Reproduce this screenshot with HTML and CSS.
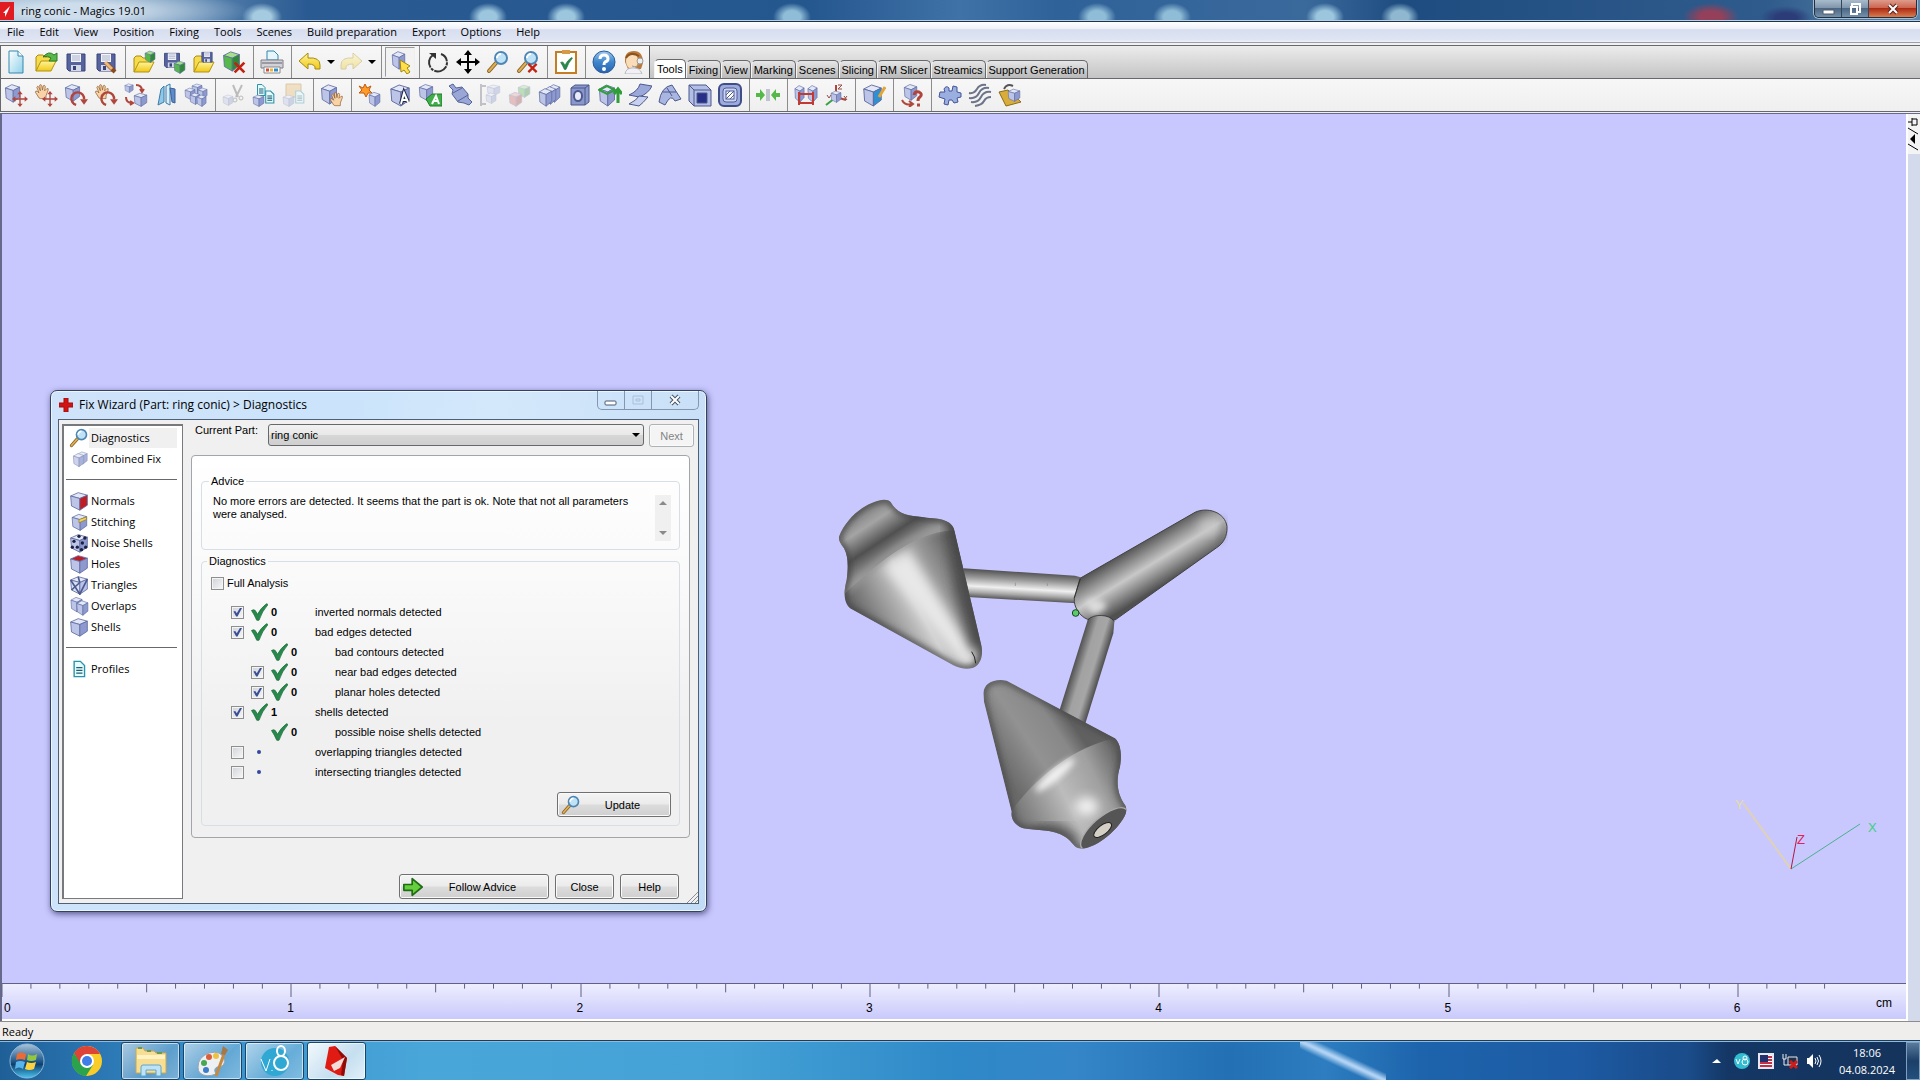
FILE: index.html
```html
<!DOCTYPE html>
<html lang="en">
<head>
<meta charset="utf-8">
<title>ring conic - Magics 19.01</title>
<link rel="stylesheet" href="styles.css">
</head>
<body>
<svg class="defs" aria-hidden="true">
  <defs>
    <linearGradient id="gPaper" x1="0" y1="0" x2="1" y2="1"><stop offset="0" stop-color="#fff"/><stop offset="1" stop-color="#8fd0ea"/></linearGradient>
    <linearGradient id="gYellow" x1="0" y1="0" x2="0" y2="1"><stop offset="0" stop-color="#fff59a"/><stop offset="1" stop-color="#f0c818"/></linearGradient>
    <linearGradient id="gBall" x1="0" y1="0" x2="0" y2="1"><stop offset="0" stop-color="#9cc8f0"/><stop offset=".5" stop-color="#3f86cc"/><stop offset="1" stop-color="#2a62ae"/></linearGradient>
  </defs>
  <symbol id="cube" viewBox="0 0 24 24" preserveAspectRatio="none">
    <g stroke="#5f6ca0" stroke-width="1" stroke-linejoin="round">
      <path class="cube-top" d="M2 6 11 2 22 5 13 9Z"/>
      <path class="cube-left" d="M2 6 13 9V23L3 18Z"/>
      <path class="cube-right" d="M13 9 22 5V17L13 23Z"/>
    </g>
  </symbol>
  <symbol id="folder" viewBox="0 0 24 24">
    <path d="M2 21V7L4 5H9L11 7H18V11" fill="#f6dc4c" stroke="#a88a14"/>
    <path d="M2 21 7 11H22L17 21Z" fill="url(#gYellow)" stroke="#b0920f" stroke-linejoin="round"/>
  </symbol>
  <symbol id="disk" viewBox="0 0 24 24">
    <path d="M3 4H21V21H5L3 19Z" fill="#56639c" stroke="#39457a"/>
    <path d="M7 4H17V12H7Z" fill="#f2f4fa"/><path d="M8 6H16M8 8H16M8 10H16" stroke="#aab2cc"/>
    <path d="M7 15H17V21H7Z" fill="#d5d9e6"/><path d="M9 16H12V20H9Z" fill="#39457a"/>
  </symbol>
  <symbol id="lens" viewBox="0 0 24 24">
    <path d="M10 13 3 21" stroke="#8a6420" stroke-width="4" stroke-linecap="round"/><path d="M10 13 3 21" stroke="#dfae58" stroke-width="2" stroke-linecap="round"/>
    <circle cx="15" cy="8" r="6" fill="#bfe2f6" stroke="#4d86b4" stroke-width="2"/><path d="M11 8A4 4 0 0 1 15 4" stroke="#fff" stroke-width="2" fill="none"/>
  </symbol>
  <symbol id="hand" viewBox="0 0 24 24">
    <path d="M7 21 2 13Q2 10 5 12L7 14 4 6Q5 3 7 6L9 11 8 3Q10 1 11 4L12 10 13 4Q15 2 16 5L15 11 18 8Q21 7 20 10L17 18V22H9Z" fill="#f9d3a8" stroke="#8e5a2c" stroke-linejoin="round"/>
  </symbol>
  <symbol id="move" viewBox="0 0 24 24">
    <path d="M12 2V22M2 12H22" stroke="currentColor" stroke-width="2"/>
    <path d="M12 0 16 5H8ZM12 24 8 19H16ZM0 12 5 8V16ZM24 12 19 16V8Z" fill="currentColor"/>
  </symbol>
  <symbol id="turn" viewBox="0 0 24 24">
    <path d="M9 20A8 8 0 1 1 19 13" fill="none" stroke="#b0453c" stroke-width="3"/><path d="M14 13H24L19 20Z" fill="#b0453c"/>
  </symbol>
  <symbol id="page" viewBox="0 0 24 24">
    <path d="M5 1H14L19 6V23H5Z" fill="url(#gPaper)" stroke="#3389ad"/><path d="M14 1V6H19" fill="#fff" stroke="#3389ad"/>
  </symbol>
  <symbol id="textpage" viewBox="0 0 24 24">
    <path d="M5 1H14L20 7V23H5Z" fill="#e6fbff" stroke="#2b93a8" stroke-width="2"/><path d="M8 10H17M8 14H17M8 18H17" stroke="#1b5e74" stroke-width="2"/>
  </symbol>
  <symbol id="tick" viewBox="0 0 24 24">
    <path d="M2 10Q5 8 7 10L10 15Q14 7 22 1L24 2Q16 11 12 23H9Q6 16 2 10Z" fill="#278a4c" stroke="#1b6b39"/>
  </symbol>
  <symbol id="cross" viewBox="0 0 24 24"><path d="M3 3 21 21M21 3 3 21" stroke="#c22214" stroke-width="5"/></symbol>
</svg>

<header class="titlebar">
  <svg class="app-icon" viewBox="0 0 14 18"><path d="M0 0H14V18H0Z" fill="#e01b22"/><path d="M3 11 10 4 8 9 5 15 5 11Z" fill="#fff"/></svg>
  <h1>ring conic - Magics 19.01</h1>
  <div class="win-controls">
    <button class="wc" aria-label="Minimize"><svg width="14" height="14"><path d="M2 8H13V12H2Z" fill="#fff" stroke="#555b66"/></svg></button>
    <button class="wc" aria-label="Restore"><svg width="14" height="14"><path d="M4 4V2H12V10H10" fill="none" stroke="#fff" stroke-width="2"/><path d="M3 5H9V12H3Z" fill="none" stroke="#fff" stroke-width="2"/></svg></button>
    <button class="wc wc-close" aria-label="Close"><svg width="14" height="14"><path d="M3 3 11 11M11 3 3 11" stroke="#5a2620" stroke-width="4"/><path d="M3 3 11 11M11 3 3 11" stroke="#fff" stroke-width="2"/></svg></button>
  </div>
</header>

<nav class="menubar">
  <a href="#">File</a><a href="#">Edit</a><a href="#">View</a><a href="#">Position</a><a href="#">Fixing</a><a href="#">Tools</a><a href="#">Scenes</a><a href="#">Build preparation</a><a href="#">Export</a><a href="#">Options</a><a href="#">Help</a>
</nav>

<div class="toprow">
  <div class="toolbar">
    <div class="group">
      <button aria-label="New"><svg viewBox="0 0 24 24"><use href="#page"/></svg></button>
      <button aria-label="Open"><svg viewBox="0 0 24 24"><use href="#folder"/><path d="M9 7Q15 0 20 5L23 3V11H15L17 8Q14 5 9 7Z" fill="#57b947" stroke="#2c7a26"/></svg></button>
      <button aria-label="Save"><svg viewBox="0 0 24 24"><use href="#disk"/></svg></button>
      <button aria-label="Save as"><svg viewBox="0 0 24 24"><use href="#disk"/><path d="M12 13 21 22" stroke="#8a4a1c" stroke-width="4"/><path d="M11 12 18 19" stroke="#eeb878" stroke-width="3"/></svg></button>
    </div>
    <div class="group">
      <button aria-label="Import part"><svg viewBox="0 0 24 24"><use href="#folder" y="1"/><use class="green" href="#cube" x="12" y="0" width="12" height="13"/></svg></button>
      <button aria-label="Save part"><svg viewBox="0 0 24 24"><use href="#disk" width="20" height="20"/><use class="green" href="#cube" x="11" y="10" width="13" height="14"/></svg></button>
      <button aria-label="Save part as"><svg viewBox="0 0 24 24"><use href="#folder" y="1"/><use href="#disk" x="8" y="0" width="14" height="14"/></svg></button>
      <button aria-label="Unload part"><svg viewBox="0 0 24 24"><use class="green" href="#cube" width="19" height="22"/><use href="#cross" x="11" y="11" width="13" height="13"/></svg></button>
    </div>
    <div class="group">
      <button aria-label="Print"><svg viewBox="0 0 24 24"><path d="M7 10V1H14L18 5V10Z" fill="#e6f6fd" stroke="#2f86ac"/><path d="M1 10H23V18H1Z" fill="#d2d2d8" stroke="#808088"/><path d="M2 13H22" stroke="#9a9aa4" stroke-width="2"/><path d="M4 17H20V23H4Z" fill="#fff" stroke="#888"/><path d="M6 20H9" stroke="#d34a38" stroke-width="3"/><path d="M10 20H13" stroke="#eab83a" stroke-width="3"/><path d="M14 20H18" stroke="#2e8fc4" stroke-width="3"/></svg></button>
    </div>
    <div class="group">
      <button aria-label="Undo"><svg viewBox="0 0 24 24"><path d="M1 11 10 3V8Q22 7 22 15V19H17Q18 14 10 14V19Z" fill="url(#gYellow)" stroke="#a58a10"/></svg></button>
      <button class="drop" aria-label="Undo list"><svg viewBox="0 0 8 8"><path d="M0 2H8L4 6Z"/></svg></button>
      <button class="off" aria-label="Redo"><svg viewBox="0 0 24 24"><path d="M23 11 14 3V8Q2 7 2 15V19H7Q6 14 14 14V19Z" fill="url(#gYellow)" stroke="#a58a10"/></svg></button>
      <button class="drop" aria-label="Redo list"><svg viewBox="0 0 8 8"><path d="M0 2H8L4 6Z"/></svg></button>
    </div>
    <div class="group">
      <button class="pressed" aria-label="Select parts"><svg viewBox="0 0 24 24"><use href="#cube" x="3" width="15" height="20"/><path d="M12 10 22 16 19 18 22 22 19 24 16 20 13 22Z" fill="#ffe04a" stroke="#a3850e"/></svg></button>
    </div>
    <div class="group">
      <button aria-label="Rotate"><svg viewBox="0 0 24 24"><path d="M7 5A9 9 0 1 0 15 4" fill="none" stroke="#333" stroke-width="2" stroke-dasharray="14 1 3 1"/><path d="M3 3H10V9Z" fill="#333"/></svg></button>
      <button aria-label="Pan"><svg viewBox="0 0 24 24"><use href="#move"/></svg></button>
      <button aria-label="Zoom"><svg viewBox="0 0 24 24"><use href="#lens"/></svg></button>
      <button aria-label="Unzoom"><svg viewBox="0 0 24 24"><use href="#lens"/><use href="#cross" x="11" y="12" width="11" height="12"/></svg></button>
    </div>
    <div class="group">
      <button aria-label="Checklist"><svg viewBox="0 0 24 24"><path d="M2 2H22V23H2Z" fill="#fff" stroke="#c57d22" stroke-width="2"/><path d="M8 0H16V4H8Z" fill="#d59a4a"/><use href="#tick" x="5" y="7" width="14" height="13"/></svg></button>
    </div>
    <div class="group last">
      <button aria-label="Help"><svg viewBox="0 0 24 24"><circle cx="12" cy="12" r="11" fill="url(#gBall)" stroke="#2a5d9c"/><path d="M8 9Q8 5 12 5 16 5 16 9 16 11 13 12 12 13 12 15" fill="none" stroke="#fff" stroke-width="3"/><circle cx="12" cy="19" r="2" fill="#fff"/></svg></button>
      <button aria-label="Support"><svg viewBox="0 0 24 24"><path d="M3 12Q2 1 12 1 21 1 21 13L19 19H6Z" fill="#b97a3c"/><ellipse cx="10" cy="11" rx="6" ry="8" fill="#fbdcb8"/><path d="M3 24Q4 18 10 18 18 17 20 24Z" fill="#f1f1f5" stroke="#b8b8c4"/><path d="M4 8Q8 1 17 6" stroke="#8a5422" stroke-width="2" fill="none"/><circle cx="18" cy="11" r="3" fill="#eee" stroke="#999"/><path d="M17 14Q15 18 10 16" stroke="#999" fill="none"/></svg></button>
    </div>
  </div>
  <nav class="tabs">
    <button class="tab active">Tools</button><button class="tab">Fixing</button><button class="tab">View</button><button class="tab">Marking</button><button class="tab">Scenes</button><button class="tab">Slicing</button><button class="tab">RM Slicer</button><button class="tab">Streamics</button><button class="tab">Support Generation</button>
  </nav>
</div>

<div class="toolbar second">
  <div class="group red">
    <button aria-label="Translate"><svg viewBox="0 0 24 24"><use href="#cube" width="17" height="20"/><use href="#move" x="8" y="8" width="16" height="16"/></svg></button>
    <button aria-label="Interactive translate"><svg viewBox="0 0 24 24"><use href="#hand" width="17" height="17"/><use href="#move" x="8" y="8" width="16" height="16"/></svg></button>
    <button aria-label="Rotate part"><svg viewBox="0 0 24 24"><use href="#cube" width="17" height="19"/><use href="#turn" x="5" y="6" width="19" height="19"/></svg></button>
    <button aria-label="Interactive rotate"><svg viewBox="0 0 24 24"><use href="#hand" width="17" height="17"/><use href="#turn" x="5" y="6" width="19" height="19"/></svg></button>
    <button aria-label="Rescale"><svg viewBox="0 0 24 24"><use href="#cube" width="10" height="10"/><use href="#cube" x="9" y="9" width="15" height="15"/><path d="M12 2Q18 2 18 8M16 6 18 9 20 6M2 14Q2 20 8 20M6 18 9 20 6 22" fill="none" stroke="#b0453c" stroke-width="2"/></svg></button>
    <button aria-label="Mirror"><svg viewBox="0 0 24 24"><path d="M4 22 7 6 10 3V19Z" fill="#8fc9e8" stroke="#3d7ba8"/><path d="M12 3 16 1V22L12 20Z" fill="#d7effa" stroke="#3d7ba8"/><path d="M16 5 21 6V20L18 19Z" fill="#5d8cc8" stroke="#3d5f98"/></svg></button>
    <button aria-label="Duplicate"><svg viewBox="0 0 24 24"><use href="#cube" x="7" y="0" width="12" height="12"/><use href="#cube" x="0" y="4" width="12" height="13"/><use href="#cube" x="13" y="4" width="11" height="12"/><use href="#cube" x="5" y="9" width="12" height="13"/><use href="#cube" x="12" y="11" width="11" height="13"/></svg></button>
  </div>
  <div class="group">
    <button class="off" aria-label="Cut"><svg viewBox="0 0 24 24"><path d="M14 14 20 2M16 14 11 2" stroke="#555" stroke-width="2"/><circle cx="13" cy="17" r="2" fill="none" stroke="#555"/><circle cx="19" cy="15" r="2" fill="none" stroke="#555"/><use href="#cube" y="11" width="12" height="12"/></svg></button>
    <button aria-label="Copy"><svg viewBox="0 0 24 24"><use href="#textpage" x="3" width="12" height="14"/><use href="#cube" y="11" width="13" height="13"/><use href="#textpage" x="11" y="6" width="13" height="16"/></svg></button>
    <button class="off" aria-label="Paste"><svg viewBox="0 0 24 24"><path d="M4 1H19V14H4Z" fill="#e8b868" stroke="#a87624"/><use href="#cube" y="11" width="13" height="13"/><use href="#textpage" x="11" y="6" width="13" height="16"/></svg></button>
  </div>
  <div class="group">
    <button aria-label="Pick and place"><svg viewBox="0 0 24 24"><use href="#cube" width="18" height="22"/><use href="#hand" x="9" y="8" width="16" height="16"/></svg></button>
  </div>
  <div class="group">
    <button aria-label="Create part"><svg viewBox="0 0 24 24"><path d="M7 1 9 5 13 3 11 7 14 10 10 10 8 14 6 10 1 10 4 7 1 3 5 5Z" fill="#ff9b28" stroke="#c25a0e"/><use href="#cube" x="10" y="8" width="13" height="16"/></svg></button>
    <button aria-label="Label"><svg viewBox="0 0 24 24"><use href="#cube" x="1" width="22" height="24"/><path d="M13 21 16 10 20 19M14 17H19" stroke="#1d2444" stroke-width="4" fill="none"/><path d="M13 21 16 10 20 19M14 17H19" stroke="#fff" stroke-width="2" fill="none"/></svg></button>
    <button aria-label="Text label"><svg viewBox="0 0 24 24"><use href="#cube" width="16" height="18"/><path d="M8 16 14 11H24V23H12Z" fill="#3fae4b" stroke="#217a2c"/><path d="M14 21 18 13 21 21M16 18H20" stroke="#fff" stroke-width="2" fill="none"/></svg></button>
    <button aria-label="Sprue"><svg viewBox="0 0 24 24"><path d="M1 3 5 1 8 5 14 4 20 11 20 15 24 19 21 22 16 20 10 19 4 11 5 7Z" fill="#9aa7d6" stroke="#55629a"/><path d="M5 10 14 5M10 18 20 12" stroke="#55629a"/></svg></button>
    <button class="off" aria-label="Cut or punch"><svg viewBox="0 0 24 24"><path d="M3 1V23M3 3H8M3 21H8" stroke="#667" fill="none" stroke-width="2"/><use href="#cube" x="8" y="1" width="15" height="12"/><use href="#cube" x="7" y="9" width="12" height="12"/></svg></button>
    <button class="off" aria-label="Boolean"><svg viewBox="0 0 24 24"><use class="green" href="#cube" x="9" y="1" width="14" height="14"/><use class="redcube" href="#cube" y="8" width="15" height="16"/></svg></button>
    <button aria-label="Offset"><svg viewBox="0 0 24 24"><use href="#cube" x="9" y="0" width="14" height="20"/><use href="#cube" x="5" y="2" width="14" height="20"/><use href="#cube" y="4" width="15" height="20"/></svg></button>
    <button aria-label="Perforate"><svg viewBox="0 0 24 24"><path d="M3 5 7 2H21V19L17 22H3Z" fill="#8a97cc" stroke="#4d598c"/><path d="M3 5H17V22M17 5 21 2" stroke="#4d598c" fill="none"/><ellipse cx="10" cy="13" rx="4" ry="5" fill="#e8ecfa" stroke="#4d598c" stroke-width="2"/></svg></button>
    <button aria-label="Extrude"><svg viewBox="0 0 24 24"><use href="#cube" width="18" height="24"/><path d="M1 7 9 3 17 7 9 11Z" stroke="#2f9e38" fill="none" stroke-width="2"/><path d="M20 20V8M16 11 20 6 24 11" fill="none" stroke="#2f9e38" stroke-width="3"/></svg></button>
    <button aria-label="Surface to solid"><svg viewBox="0 0 24 24"><path d="M1 12Q10 8 12 1L24 3Q20 11 11 14Z" fill="#9ba8da" stroke="#4d598c"/><path d="M1 21Q9 17 11 13L20 14Q15 20 11 23Z" fill="#c7d0ee" stroke="#4d598c"/></svg></button>
    <button aria-label="Surface"><svg viewBox="0 0 24 24"><path d="M1 19Q3 4 14 2L23 16 17 18Q13 10 7 22Z" fill="#a9b6e2" stroke="#4d598c"/><path d="M5 9 18 9M9 5 14 13" stroke="#4d598c"/></svg></button>
    <button aria-label="Hollow"><svg viewBox="0 0 24 24"><path d="M1 2H18L23 7V23H6L1 18Z" fill="#b3bee6" stroke="#4d598c"/><path d="M1 2 6 7H23M6 7V23" stroke="#4d598c" fill="none"/><path d="M9 10H19V20H9Z" fill="#272f86" stroke="#4d598c"/></svg></button>
    <button aria-label="Structure"><svg viewBox="0 0 24 24"><rect x="1" y="1" width="22" height="22" rx="5" fill="#9dabdc" stroke="#3f4d88" stroke-width="2"/><rect x="5" y="5" width="14" height="14" rx="3" fill="#c8d2f2" stroke="#4f5d98"/><rect x="8" y="8" width="8" height="8" fill="#fff" stroke="#4f5d98"/><path d="M8 12 12 8M8 16 16 8M12 16 16 12" stroke="#4f5d98"/></svg></button>
  </div>
  <div class="group">
    <button aria-label="Shrink"><svg viewBox="0 0 24 24"><path d="M0 10H4V6L9 12 4 18V14H0ZM24 10H20V6L15 12 20 18V14H24Z" fill="#54b948"/><path d="M11 6V18M13 6V18" stroke="#8b93a8"/></svg></button>
  </div>
  <div class="group">
    <button aria-label="Distance"><svg viewBox="0 0 24 24"><use href="#cube" y="1" width="11" height="19"/><use href="#cube" x="13" y="1" width="11" height="19"/><path d="M5 11H19M5 20H20M5 9V22M19 9V22" stroke="#c23a34" stroke-width="2"/></svg></button>
    <button aria-label="Coordinate system"><svg viewBox="0 0 24 24"><path d="M12 12V2M12 14 22 17" stroke="#b0453c" stroke-width="2"/><path d="M11 15 2 22" stroke="#37a145" stroke-width="2"/><use href="#cube" x="6" y="7" width="12" height="13"/><path d="M14 2H18L14 6H18M3 12 5 15 7 12M20 13 23 17M23 13 20 17" stroke="#9a4a40" fill="none"/></svg></button>
  </div>
  <div class="group">
    <button aria-label="Edit part"><svg viewBox="0 0 24 24"><use class="blue" href="#cube" width="21" height="24"/><path d="M23 4 17 14" stroke="#e2a53a" stroke-width="3"/></svg></button>
  </div>
  <div class="group">
    <button aria-label="Part info"><svg viewBox="0 0 24 24"><use href="#cube" x="3" width="15" height="18"/><path d="M2 17Q5 23 12 21M9 18 13 21 9 24" stroke="#b0453c" stroke-width="2" fill="none"/><path d="M14 12Q15 8 19 9 23 11 20 14 18 15 18 18M17 22H20" stroke="#b0453c" stroke-width="3" fill="none"/></svg></button>
  </div>
  <div class="group last">
    <button aria-label="Settings"><svg viewBox="0 0 24 24"><path d="M2 9H7L6 6Q8 2 11 5V8H14L15 3 19 4V9L23 10V14L19 15 20 19 16 20 14 17H11L10 22 6 21 7 16 1 14Z" fill="#9aaee0" stroke="#43549a"/></svg></button>
    <button aria-label="Texture"><svg viewBox="0 0 24 24"><path d="M1 10Q6 11 9 6T18 2M1 15Q8 16 11 10T21 5M3 19Q10 20 13 14T23 9M7 23Q14 22 16 18T23 14" fill="none" stroke="#6c7488" stroke-width="2"/></svg></button>
    <button aria-label="Unfold"><svg viewBox="0 0 24 24"><path d="M1 9 10 7 23 19 8 23Z" fill="#d9ad3c" stroke="#8b6a18"/><use href="#cube" x="9" y="5" width="14" height="14"/><path d="M6 6Q9 0 15 3" stroke="#555" fill="none" stroke-width="2"/></svg></button>
  </div>
</div>

<main class="workspace">
  <div class="scene">
    <div class="canvas">
      <svg class="model" viewBox="0 0 1290 1140" role="img" aria-label="ring conic part">
        <defs>
          <linearGradient id="rodA" gradientUnits="userSpaceOnUse" x1="610" y1="274" x2="605" y2="362"><stop offset="0" stop-color="#4c4c4c"/><stop offset=".3" stop-color="#999"/><stop offset=".6" stop-color="#f0f0f0"/><stop offset=".8" stop-color="#aaa"/><stop offset="1" stop-color="#505050"/></linearGradient>
          <linearGradient id="rodB" gradientUnits="userSpaceOnUse" x1="955" y1="192" x2="1030" y2="315"><stop offset="0" stop-color="#555"/><stop offset=".25" stop-color="#909090"/><stop offset=".5" stop-color="#c8c8c8"/><stop offset=".72" stop-color="#959595"/><stop offset="1" stop-color="#505050"/></linearGradient>
          <linearGradient id="rodC" gradientUnits="userSpaceOnUse" x1="764" y1="550" x2="842" y2="574"><stop offset="0" stop-color="#555"/><stop offset=".35" stop-color="#a2a2a2"/><stop offset=".7" stop-color="#a6a6a6"/><stop offset="1" stop-color="#555"/></linearGradient>
          <linearGradient id="coneA" gradientUnits="userSpaceOnUse" x1="110" y1="400" x2="440" y2="220"><stop offset="0" stop-color="#666"/><stop offset=".25" stop-color="#a0a0a0"/><stop offset=".45" stop-color="#d0d0d0"/><stop offset=".75" stop-color="#8c8c8c"/><stop offset="1" stop-color="#505050"/></linearGradient>
          <linearGradient id="neckA" gradientUnits="userSpaceOnUse" x1="120" y1="90" x2="215" y2="235"><stop offset="0" stop-color="#808080"/><stop offset=".3" stop-color="#a4a4a4"/><stop offset=".65" stop-color="#505050"/><stop offset="1" stop-color="#9a9a9a"/></linearGradient>
          <linearGradient id="coneB" gradientUnits="userSpaceOnUse" x1="520" y1="830" x2="730" y2="690"><stop offset="0" stop-color="#6a6a6a"/><stop offset=".45" stop-color="#929292"/><stop offset=".8" stop-color="#888"/><stop offset="1" stop-color="#606060"/></linearGradient>
          <linearGradient id="neckB" gradientUnits="userSpaceOnUse" x1="590" y1="1020" x2="910" y2="860"><stop offset="0" stop-color="#707070"/><stop offset=".45" stop-color="#bcbcbc"/><stop offset=".75" stop-color="#a0a0a0"/><stop offset="1" stop-color="#666"/></linearGradient>
          <filter id="soft" x="-50%" y="-50%" width="200%" height="200%"><feGaussianBlur stdDeviation="16"/></filter>
          <filter id="softer" x="-50%" y="-50%" width="200%" height="200%"><feGaussianBlur stdDeviation="9"/></filter>
          <path id="outA" d="M57 170C80 110 140 65 190 59 215 58 212 70 222 80 245 108 280 108 320 113 370 115 400 125 404 155L485 500C490 530 480 555 460 563 440 570 420 565 400 556L90 385C68 365 72 330 80 300 85 260 85 230 72 205 60 190 55 180 57 170Z"/>
          <path id="outB" d="M490 640C492 610 520 595 560 602L885 775C905 795 905 830 900 860 888 900 890 940 915 975 925 990 915 1010 900 1030 870 1070 820 1105 785 1106 760 1105 760 1085 735 1070 700 1048 650 1052 610 1045 580 1035 572 1010 575 995L492 665Z"/>
          <clipPath id="clipA"><use href="#outA"/></clipPath>
          <clipPath id="clipB"><use href="#outB"/></clipPath>
        </defs>
        <path d="M430 265 765 287Q780 289 790 297L770 370 430 350Z" fill="url(#rodA)"/>
        <path d="M586 308V318M682 310V318" stroke="#888" stroke-width="2"/>
        <path d="M780 295 1125 97C1160 80 1215 95 1221 140 1222 170 1210 190 1190 203L885 420 803 418C780 410 760 380 763 355Z" fill="url(#rodB)" stroke="#444" stroke-width="3"/>
        <path d="M795 365Q830 345 860 375 850 400 815 402Z" fill="#ddd" filter="url(#softer)"/>
        <ellipse cx="1165" cy="140" rx="25" ry="20" fill="#c9c9c9" filter="url(#soft)"/>
        <path d="M1205 110Q1225 150 1195 190" fill="none" stroke="#555" stroke-width="10" opacity=".5" filter="url(#softer)"/>
        <path d="M803 420C820 400 870 402 883 425L880 460 790 750 712 712Z" fill="url(#rodC)"/>
        <path d="M803 420C820 400 870 402 883 425M781 297 762 355" fill="none" stroke="#222" stroke-width="2"/>
        <g clip-path="url(#clipA)">
          <use href="#outA" fill="url(#coneA)"/>
          <path d="M195 265 265 210 465 530 450 570 430 555Z" fill="#e8e8e8" filter="url(#soft)"/>
          <path d="M0 0H420V150C290 150 190 235 70 345H0Z" fill="url(#neckA)"/>
          <path d="M80 335C190 230 290 150 400 140" fill="none" stroke="#959595" stroke-width="16" filter="url(#softer)"/>
          <path d="M400 120 430 330 480 500" fill="none" stroke="#505050" stroke-width="50" filter="url(#soft)"/>
          <use href="#outA" fill="none" stroke="#444" stroke-width="16" filter="url(#softer)"/>
          <path d="M455 515Q466 530 467 550" fill="none" stroke="#222" stroke-width="3"/>
        </g>
        <g clip-path="url(#clipB)">
          <use href="#outB" fill="url(#coneB)"/>
          <path d="M575 992C640 900 760 800 885 775L1000 800V1140H560Z" fill="url(#neckB)"/>
          <ellipse cx="705" cy="885" rx="75" ry="15" transform="rotate(-40 705 885)" fill="#f4f4f4" filter="url(#softer)"/>
          <ellipse cx="800" cy="980" rx="35" ry="28" fill="#f2f2f2" filter="url(#soft)"/>
          <path d="M640 1060Q720 1020 770 1090" fill="none" stroke="#444" stroke-width="20" filter="url(#soft)"/>
          <use href="#outB" fill="none" stroke="#444" stroke-width="14" filter="url(#softer)"/>
          <ellipse cx="852" cy="1046" rx="88" ry="34" transform="rotate(-41 852 1046)" fill="#555" stroke="#aaa" stroke-width="4"/>
          <ellipse cx="848" cy="1050" rx="32" ry="14" transform="rotate(-38 848 1050)" fill="#d4d0c6" stroke="#222" stroke-width="3"/>
        </g>
        <circle cx="767" cy="399" r="10" fill="#5cc96c" stroke="#14471c" stroke-width="3"/>
      </svg>
      <svg class="axes" viewBox="0 0 150 84">
        <path d="M61 74 13 8" stroke="#e0d2b0" stroke-width="2"/><path d="M61 74 130 29" stroke="#4bb08c"/><path d="M61 74 67 42" stroke="#b01848"/>
        <text x="5" y="14" fill="#e6dca4">Y</text><text x="138" y="37" fill="#3fcf80">X</text><text x="67" y="49" fill="#e0205c">Z</text>
      </svg>

      <section class="dialog" aria-label="Fix Wizard">
        <header class="dlg-title">
          <svg width="14" height="14" viewBox="0 0 14 14"><path d="M5 0H9V5H14V9H9V14H5V9H0V5H5Z" fill="#d31313" stroke="#a50d0d"/></svg>
          <h2>Fix Wizard (Part: ring conic) &gt; Diagnostics</h2>
          <div class="dlg-controls">
            <button aria-label="Minimize"><svg width="14" height="14"><rect x="1" y="8" width="11" height="4" rx="1" fill="#fff" stroke="#4b5b70"/></svg></button>
            <button aria-label="Maximize" disabled><svg width="14" height="14"><path d="M2 3H12V11H2Z M5 6H9V8H5Z" fill="none" stroke="#a9bfda"/></svg></button>
            <button aria-label="Close"><svg width="14" height="14"><path d="M3 3 11 11M11 3 3 11" stroke="#465568" stroke-width="4"/><path d="M3 3 11 11M11 3 3 11" stroke="#fff" stroke-width="2"/></svg></button>
          </div>
        </header>
        <div class="dlg-body">
          <nav class="side">
            <a class="sel" href="#"><svg viewBox="0 0 24 24"><use href="#lens"/></svg><span>Diagnostics</span></a>
            <a href="#"><svg viewBox="0 0 24 24"><g opacity=".75"><use href="#cube" x="9" y="2" width="14" height="17"/><use href="#cube" x="4" y="4" width="15" height="18"/></g></svg><span>Combined Fix</span></a>
            <hr>
            <a href="#"><svg viewBox="0 0 24 24"><use class="rightred" href="#cube"/></svg><span>Normals</span></a>
            <a href="#"><svg viewBox="0 0 24 24"><use href="#cube" x="2" y="1" width="21" height="22"/><path d="M12 9 21 6V9L12 13Z" fill="#f2d35c" stroke="#9a8230"/></svg><span>Stitching</span></a>
            <a href="#"><svg viewBox="0 0 24 24"><use href="#cube"/><g fill="#1b2240"><circle cx="6" cy="10" r="2"/><circle cx="10" cy="17" r="2"/><circle cx="16" cy="12" r="2"/><circle cx="20" cy="17" r="2"/><circle cx="12" cy="4" r="2"/><circle cx="19" cy="6" r="2"/><circle cx="4" cy="17" r="2"/><circle cx="15" cy="20" r="2"/></g></svg><span>Noise Shells</span></a>
            <a href="#"><svg viewBox="0 0 24 24"><use class="topred" href="#cube"/></svg><span>Holes</span></a>
            <a href="#"><svg viewBox="0 0 24 24"><use class="pale" href="#cube"/><path d="M2 6 13 23 22 5M11 2 13 9M3 18 13 9" stroke="#4d598c" fill="none" stroke-width="2"/></svg><span>Triangles</span></a>
            <a href="#"><svg viewBox="0 0 24 24"><use href="#cube" x="1" y="0" width="16" height="20"/><use href="#cube" x="8" y="4" width="16" height="20"/></svg><span>Overlaps</span></a>
            <a href="#"><svg viewBox="0 0 24 24"><use href="#cube"/></svg><span>Shells</span></a>
            <hr>
            <a href="#"><svg viewBox="0 0 24 24"><use href="#textpage" x="2" y="1" width="20" height="22"/></svg><span>Profiles</span></a>
          </nav>
          <div class="content">
            <div class="part-row">
              <label for="part">Current Part:</label>
              <div class="combo"><select id="part"><option>ring conic</option></select><svg width="8" height="8"><path d="M0 2H8L4 6Z"/></svg></div>
              <button class="btn" disabled>Next</button>
            </div>
            <div class="panel">
              <fieldset class="advice">
                <legend>Advice</legend>
                <p>No more errors are detected. It seems that the part is ok. Note that not all parameters were analysed.</p>
                <div class="scroll"><svg width="8" height="8"><path d="M0 6H8L4 2Z" fill="#8a8a8a"/></svg><svg width="8" height="8"><path d="M0 2H8L4 6Z" fill="#8a8a8a"/></svg></div>
              </fieldset>
              <fieldset class="diag">
                <legend>Diagnostics</legend>
                <div class="full"><input type="checkbox" id="full"><label for="full">Full Analysis</label></div>
                <ul>
                  <li><input type="checkbox" id="d1" checked><svg class="ok"><use href="#tick"/></svg><b>0</b><label for="d1">inverted normals detected</label></li>
                  <li><input type="checkbox" id="d2" checked><svg class="ok"><use href="#tick"/></svg><b>0</b><label for="d2">bad edges detected</label></li>
                  <li class="sub"><i></i><svg class="ok"><use href="#tick"/></svg><b>0</b><span>bad contours detected</span></li>
                  <li class="sub"><input type="checkbox" id="d4" checked><svg class="ok"><use href="#tick"/></svg><b>0</b><label for="d4">near bad edges detected</label></li>
                  <li class="sub"><input type="checkbox" id="d5" checked><svg class="ok"><use href="#tick"/></svg><b>0</b><label for="d5">planar holes detected</label></li>
                  <li><input type="checkbox" id="d6" checked><svg class="ok"><use href="#tick"/></svg><b>1</b><label for="d6">shells detected</label></li>
                  <li class="sub"><i></i><svg class="ok"><use href="#tick"/></svg><b>0</b><span>possible noise shells detected</span></li>
                  <li><input type="checkbox" id="d8"><svg class="ok" viewBox="0 0 18 18"><circle cx="9" cy="9" r="2" fill="#33489c"/></svg><b></b><label for="d8">overlapping triangles detected</label></li>
                  <li><input type="checkbox" id="d9"><svg class="ok" viewBox="0 0 18 18"><circle cx="9" cy="9" r="2" fill="#33489c"/></svg><b></b><label for="d9">intersecting triangles detected</label></li>
                </ul>
                <button class="btn icon-btn update"><svg viewBox="0 0 24 24"><use href="#lens"/></svg><span>Update</span></button>
              </fieldset>
            </div>
            <div class="actions">
              <button class="btn icon-btn follow"><svg viewBox="0 0 24 24"><path d="M1 9H11V2L23 12 11 22V16H1Z" fill="#66cf3e" stroke="#1f6b16" stroke-width="2" stroke-linejoin="round"/></svg><span>Follow Advice</span></button>
              <button class="btn">Close</button>
              <button class="btn">Help</button>
            </div>
          </div>
          <svg class="grip" width="12" height="12"><path d="M1 12 12 1M5 12 12 5M9 12 12 9" stroke="#8b9098"/></svg>
        </div>
      </section>
    </div>
    <div class="ruler">
      <div class="cm"><svg viewBox="0 0 100 14" preserveAspectRatio="none"><path d="M0 0V14M10 0V5M20 0V5M30 0V5M40 0V5M50 0V9M60 0V5M70 0V5M80 0V5M90 0V5"/></svg><span>0</span></div>
      <div class="cm"><svg viewBox="0 0 100 14" preserveAspectRatio="none"><path d="M0 0V14M10 0V5M20 0V5M30 0V5M40 0V5M50 0V9M60 0V5M70 0V5M80 0V5M90 0V5"/></svg><span>1</span></div>
      <div class="cm"><svg viewBox="0 0 100 14" preserveAspectRatio="none"><path d="M0 0V14M10 0V5M20 0V5M30 0V5M40 0V5M50 0V9M60 0V5M70 0V5M80 0V5M90 0V5"/></svg><span>2</span></div>
      <div class="cm"><svg viewBox="0 0 100 14" preserveAspectRatio="none"><path d="M0 0V14M10 0V5M20 0V5M30 0V5M40 0V5M50 0V9M60 0V5M70 0V5M80 0V5M90 0V5"/></svg><span>3</span></div>
      <div class="cm"><svg viewBox="0 0 100 14" preserveAspectRatio="none"><path d="M0 0V14M10 0V5M20 0V5M30 0V5M40 0V5M50 0V9M60 0V5M70 0V5M80 0V5M90 0V5"/></svg><span>4</span></div>
      <div class="cm"><svg viewBox="0 0 100 14" preserveAspectRatio="none"><path d="M0 0V14M10 0V5M20 0V5M30 0V5M40 0V5M50 0V9M60 0V5M70 0V5M80 0V5M90 0V5"/></svg><span>5</span></div>
      <div class="cm tail"><svg viewBox="0 0 169 14" preserveAspectRatio="none"><path d="M0 0V14M29 0V5M58 0V5M87 0V5"/></svg><span>6</span><span class="unit">cm</span></div>
    </div>
  </div>
  <aside class="sidestrip"><svg width="12" height="40"><path d="M0 8H4M4 4V12M4 5H9V11H4M0 14 10 20M0 30 10 36" fill="none" stroke="#000"/><path d="M7 20V30L2 25Z"/></svg></aside>
</main>

<footer class="status">Ready</footer>

<div class="taskbar">
  <button class="start" aria-label="Start"><svg viewBox="0 0 38 38"><defs><linearGradient id="gOrb" x1="0" y1="0" x2="0" y2="1"><stop offset="0" stop-color="#a9c4da"/><stop offset=".5" stop-color="#225a8c"/><stop offset=".6" stop-color="#0d3f70"/><stop offset="1" stop-color="#49c4f0"/></linearGradient></defs><circle cx="19" cy="19" r="17" fill="url(#gOrb)" stroke="#8fb8d8"/><path d="M9 12Q13 9 18 12L17 18Q12 16 8 18Z" fill="#ee6a35"/><path d="M20 12Q24 15 29 12L28 18Q23 20 19 18Z" fill="#93c83e"/><path d="M8 20Q12 18 17 20L15 27Q11 24 7 27Z" fill="#58b4ea"/><path d="M19 20Q23 22 28 20L26 27Q21 29 17 27Z" fill="#fcd33e"/></svg></button>
  <button class="pin" aria-label="Chrome"><svg viewBox="0 0 32 32"><circle cx="16" cy="16" r="15" fill="#f9cc28"/><path d="M3 8A15 15 0 0 1 29 9H16L9 19Z" fill="#dd4437"/><path d="M3 8A15 15 0 0 0 15 31L22 20 10 19Z" fill="#2ba24c"/><circle cx="16" cy="16" r="7" fill="#fff"/><circle cx="16" cy="16" r="5" fill="#3f7ee8"/></svg></button>
  <button class="task" aria-label="Explorer"><svg viewBox="0 0 32 32"><path d="M1 3H8L10 6H19L21 8H31V28H1Z" fill="#f6df94" stroke="#caa850"/><path d="M3 3H7M12 6H16M22 8H27" stroke="#6a9a50" stroke-width="2"/><path d="M2 12H30" stroke="#fff3c4" stroke-width="4"/><path d="M6 31V22Q6 20 8 20H24Q26 20 26 22V31H21V25H11V31Z" fill="#bfe3f6" stroke="#5aa6d0"/></svg></button>
  <button class="task" aria-label="Paint"><svg viewBox="0 0 32 32"><path d="M1 22Q1 12 12 8 24 5 27 14 29 22 20 22 16 24 19 29 9 33 3 28 1 26 1 22Z" fill="#eef1f4" stroke="#9aa4b0"/><circle cx="7" cy="18" r="3" fill="#48a850"/><circle cx="12" cy="12" r="3" fill="#d85f3a"/><circle cx="19" cy="11" r="3" fill="#f0c13c"/><circle cx="9" cy="25" r="3" fill="#3c7cc8"/><path d="M27 9 19 31" stroke="#c58a42" stroke-width="3"/><path d="M26 1 31 5 28 10 24 9Z" fill="#a5774a"/></svg></button>
  <button class="task" aria-label="V8"><svg viewBox="0 0 32 32"><circle cx="16" cy="17" r="14" fill="#2fa9d4"/><path d="M2 14 7 26 11 14M13 25V26" stroke="#fff" fill="none" stroke-width="1"/><ellipse cx="22" cy="6" rx="4" ry="5" fill="none" stroke="#fff" stroke-width="2"/><ellipse cx="22" cy="18" rx="7" ry="7" fill="none" stroke="#fff" stroke-width="2"/></svg></button>
  <button class="task current" aria-label="Magics"><svg viewBox="0 0 32 32"><path d="M8 2 14 1 26 13 23 31 17 30 4 23Z" fill="#e01b14"/><path d="M14 1 26 13 23 31 20 30 22 15Z" fill="#8e0c08"/><path d="M10 20 24 12 19 23 13 26Z" fill="#f4dcd8"/></svg></button>
  <div class="tray">
    <svg width="14" height="16"><path d="M0 10H9L5 6Z" fill="#fff"/></svg>
    <svg width="16" height="16" viewBox="0 0 16 16"><circle cx="8" cy="8" r="8" fill="#32bcd2"/><path d="M2 6 4 11 6 6" stroke="#fff" fill="none"/><circle cx="11" cy="9" r="3" fill="none" stroke="#fff"/><circle cx="11" cy="5" r="2" fill="none" stroke="#fff"/></svg>
    <svg width="16" height="16" viewBox="0 0 16 16"><path d="M0 0H16V16H0Z" fill="#e9e6f2"/><path d="M2 2H14V14H2Z" fill="#fff"/><path d="M2 4H14M2 7H14M2 10H14M2 13H14" stroke="#c03048" stroke-width="2"/><path d="M2 2H10V9H2Z" fill="#23306e"/></svg>
    <svg width="16" height="16" viewBox="0 0 16 16"><path d="M1 1V6H4V1M2 6V12H6" stroke="#eee" fill="none"/><path d="M6 4H15V12H6Z" fill="#20304c" stroke="#e8e8e8"/><path d="M8 8 15 15M15 8 8 15" stroke="#d01c18" stroke-width="3"/></svg>
    <svg width="16" height="16" viewBox="0 0 16 16"><path d="M1 5H3L7 1V15L3 11H1Z" fill="#fff"/><path d="M9 5Q11 8 9 11M11 4Q14 8 11 12M13 2Q17 8 13 14" stroke="#fff" fill="none"/></svg>
    <div class="clock"><span>18:06</span><span>04.08.2024</span></div>
  </div>
  <button class="desk" aria-label="Show desktop"></button>
</div>
</body>
</html>
```
FILE: styles.css
```css
* { box-sizing: border-box; }
html, body { height: 100%; margin: 0; }
body {
  display: flex;
  flex-direction: column;
  overflow: hidden;
  background: #f0f0f0;
  font: 11px/14px "Liberation Sans", Arial, sans-serif;
  color: #000;
}
button {
  font: inherit;
  color: inherit;
  margin: 0;
  padding: 0;
  border: 0;
  background: none;
}
h1, h2, p, ul { margin: 0; padding: 0; font: inherit; list-style: none; }
a { color: inherit; text-decoration: none; }
svg { display: block; flex: none; }
.defs { position: absolute; width: 0; height: 0; }

/* cube colours, overridden per icon */
.cube-top { fill: var(--top, #e3e8f8); }
.cube-left { fill: var(--left, #bcc5e8); }
.cube-right { fill: var(--right, #8d99cf); }
.green { --top: #a5e08a; --left: #54b948; --right: #2e8a33; }
.redcube { --top: #e9a0a0; --left: #d46060; --right: #a83a3a; }
.blue { --right: #2f8fd0; }
.rightred { --right: #c01c24; }
.topred { --top: #c01c24; }
.pale { --left: #d9dff5; --right: #b9c2ea; }

/* title bar */
.titlebar {
  flex: none;
  display: flex;
  align-items: center;
  height: 22px;
  border-bottom: 1px solid #1c3450;
  box-shadow: inset 0 -1px #b9cfe2;
  font: 11px/20px "Open Sans", "Noto Sans", sans-serif;
  background:
    radial-gradient(ellipse 20px 14px at 262px 17px, #a5cbe0 45%, transparent),
    radial-gradient(ellipse 19px 14px at 488px 17px, #9cc6de 45%, transparent),
    radial-gradient(ellipse 19px 14px at 566px 17px, #9cc6de 45%, transparent),
    radial-gradient(ellipse 19px 14px at 792px 17px, #8fbcd6 45%, transparent),
    radial-gradient(ellipse 19px 14px at 1097px 17px, #8fbcd6 45%, transparent),
    radial-gradient(ellipse 19px 14px at 1172px 17px, #8fbcd6 45%, transparent),
    radial-gradient(ellipse 19px 14px at 1325px 17px, #9cc6de 45%, transparent),
    radial-gradient(ellipse 19px 14px at 1400px 17px, #8fb8d0 45%, transparent),
    radial-gradient(ellipse 28px 14px at 1711px 17px, #94405a 40%, transparent),
    radial-gradient(ellipse 26px 12px at 1786px 18px, #2b3c78 40%, transparent),
    radial-gradient(ellipse 170px 24px at 80px 11px, rgba(215,228,240,.9) 30%, transparent),
    linear-gradient(90deg, #8fafca, #5b86b0 10%, #2a5a92 16%, #25578f 42%, #3f72a6 50%, #2f6299 55%, #3a699c 68%, #1f4c80 73%, #2f5b8c 92%, #5d87ac);
}
.app-icon { width: 14px; height: 18px; }
.titlebar h1 { margin-left: 7px; }
.win-controls {
  display: flex;
  align-self: flex-start;
  height: 18px;
  margin: 0 3px 0 auto;
  border: 1px solid #20303f;
  border-top: 0;
  border-radius: 0 0 5px 5px;
  box-shadow: 0 0 0 1px #a8bccd;
  overflow: hidden;
}
.wc {
  display: grid;
  place-items: center;
  width: 27px;
  border-right: 1px solid #33475a;
  background: linear-gradient(#a9bccd, #8096ac 45%, #4c6784 50%, #7590aa);
}
.wc-close { width: 47px; border: 0; background: linear-gradient(#dd9c8c, #cd6651 45%, #ae2c14 50%, #d97c50); }

/* menu */
.menubar {
  flex: none;
  display: flex;
  align-items: center;
  gap: 15px;
  height: 21px;
  padding: 0 7px;
  border-bottom: 1px solid #9a9ea8;
  background: linear-gradient(#fff, #eef1f8 35%, #d7deef 38%, #dfe5f3 90%, #f4f4f8);
  font: 11px/18px "Open Sans", "Noto Sans", sans-serif;
}

/* toolbars */
.toprow {
  flex: none;
  display: flex;
  height: 33px;
  margin-top: 2px;
  border-top: 1px solid #66686c;
  border-left: 1px solid #66686c;
  background: linear-gradient(#ececec, #c4c4c4);
}
.toolbar { display: flex; background: linear-gradient(#f7f7f7, #efefef); }
.toprow .toolbar { border-right: 1px solid #55575c; }
.second {
  flex: none;
  height: 34px;
  border: 1px solid #66686c;
  border-right: 0;
}
.group {
  display: flex;
  align-items: center;
  padding: 0 4px 0 3px;
  border-right: 1px solid #8c8c8c;
}
.group:first-child { padding-left: 0; }
.group.last { border-right: 0; padding-right: 0; }
.group button { display: grid; place-items: center; width: 30px; height: 30px; }
.group button svg { width: 24px; height: 24px; }
.group .drop { width: 11px; }
.group .drop svg { width: 8px; height: 8px; }
.group .off { opacity: .35; }
.group .pressed {
  border: 1px solid #999;
  border-right-color: #eee;
  border-bottom-color: #eee;
  background: #f2f2f2;
}
.red { color: #b0453c; }

.tabs { display: flex; align-items: flex-end; padding-left: 4px; }
.tab {
  height: 18px;
  padding: 0 2px;
  border: 1px solid #66686c;
  border-bottom: 0;
  border-left-color: #f4f4f4;
  border-radius: 5px 5px 0 0;
  background: linear-gradient(#e6e6e6, #b8b8b8);
  white-space: nowrap;
}
.tab.active { height: 19px; background: #fff; }

/* workspace */
.workspace {
  flex: 1;
  min-height: 0;
  display: flex;
  margin-top: 1px;
  border-top: 1px solid #66698a;
  border-left: 2px solid #66698a;
}
.scene { flex: 1; display: flex; flex-direction: column; border-right: 2px solid #fff; }
.canvas { flex: 1; position: relative; background: #c8c8ff; }
.sidestrip { width: 12px; background: #d3daec; }
.sidestrip svg { background: #f4f4f4; }
.model { position: absolute; left: 818px; top: 366px; width: 430px; height: 380px; }
.axes { position: absolute; right: 26px; bottom: 104px; width: 150px; height: 84px; font: 13px "Liberation Sans", sans-serif; }

.ruler {
  display: grid;
  grid-template-columns: repeat(6, 289fr) 168fr;
  height: 38px;
  border-top: 1px solid #5f6284;
  border-bottom: 2px solid #fff;
  background: linear-gradient(#eeeeff, #c9c9fb);
  font-size: 12px;
}
.cm { position: relative; display: grid; align-content: start; gap: 4px; }
.cm svg { width: 100%; height: 13px; overflow: visible; }
.cm path { stroke: #5f6284; stroke-width: 1px; vector-effect: non-scaling-stroke; }
.cm span { margin-left: -4px; }
.cm:first-child span { margin-left: 2px; }
.cm .unit { position: absolute; right: 14px; top: 12px; }

.status {
  flex: none;
  height: 19px;
  padding: 0 2px;
  border-top: 1px solid #8c8c8c;
  background: #f0eeec;
  font: 11px/19px "Open Sans", "Noto Sans", sans-serif;
}

/* dialog */
.dialog {
  position: absolute;
  left: 48px;
  top: 276px;
  width: 657px;
  padding: 0 7px 7px;
  border: 1px solid #33435c;
  border-radius: 7px;
  background: linear-gradient(100deg, #cfe3fa, #cbe4fb 40%, #d4e8fb 60%, #c3dcf6);
  box-shadow: inset 0 0 0 1px #eaf5ff, 1px 2px 6px rgba(40,40,90,.7);
}
.dlg-title {
  display: flex;
  align-items: center;
  gap: 6px;
  height: 28px;
  padding-left: 1px;
  font: 12px/18px "Open Sans", "Noto Sans", sans-serif;
}
.dlg-controls {
  display: flex;
  align-self: flex-start;
  height: 19px;
  margin-left: auto;
  border: 1px solid #8496b0;
  border-top: 0;
  border-radius: 0 0 5px 5px;
}
.dlg-controls button { display: grid; place-items: center; width: 27px; border-right: 1px solid #8496b0; }
.dlg-controls button:last-child { width: 46px; border: 0; }
.dlg-body {
  position: relative;
  display: flex;
  gap: 8px;
  padding: 4px 8px 4px 3px;
  border: 1px solid #4f5f76;
  background: #f0f0f0;
}
.side {
  width: 121px;
  padding: 2px 5px 2px 3px;
  border: 1px solid #77797c;
  box-shadow: inset 1px 1px #77797c;
  background: #fff;
  font: 11px/20px "Open Sans", "Noto Sans", sans-serif;
}
.side a { display: grid; grid-template-columns: 20px 1fr; align-items: center; height: 21px; padding-left: 3px; }
.side svg { width: 20px; height: 20px; }
.side span { padding-left: 2px; }
.side .sel span { background: #f0f0f0; }
.side hr { height: 1px; margin: 10px 0; border: 0; background: #66686c; }
.content { flex: 1; }
.part-row { display: flex; gap: 5px; }
.part-row label { width: 72px; padding-left: 4px; margin-top: -1px; }
.combo { flex: 1; display: grid; height: 22px; }
.combo > * { grid-area: 1 / 1; }
.combo svg { place-self: center end; margin-right: 4px; }
.combo select {
  appearance: none;
  padding: 0 2px;
  border: 1px solid #66686c;
  border-radius: 3px;
  background: linear-gradient(#f2f2f2, #e8e8e8 48%, #d6d6d6 52%, #cfcfcf);
  font: inherit;
  color: inherit;
}
.btn {
  width: 59px;
  height: 25px;
  border: 1px solid #707070;
  border-radius: 3px;
  background: linear-gradient(#f4f4f4, #ebebeb 48%, #dcdcdc 52%, #cfcfcf);
  box-shadow: inset 0 0 0 1px #fafafa;
}
.btn:disabled { width: 45px; height: 23px; margin: 0 -4px 0 0; border-color: #adb2b5; background: #f4f4f4; color: #838383; }
.panel {
  margin-top: 8px;
  padding: 18px 9px 11px;
  border: 1px solid #a2a5aa;
  border-radius: 4px;
  background: linear-gradient(#fff, #f9f9f9 35%, #f0f0f0 70%);
}
fieldset { margin: 0; padding: 0; border: 1px solid #d5dfe5; border-radius: 4px; }
legend { margin-left: -4px; padding: 0 2px; }
.advice { display: flex; justify-content: space-between; height: 76px; padding: 7px 8px 7px 11px; }
.advice p { width: 430px; line-height: 13px; }
.scroll { display: flex; flex-direction: column; justify-content: space-between; align-items: center; width: 16px; padding: 4px 0; background: #f0f0f0; height: 46px; }
.diag { margin-top: 4px; height: 272px; padding: 7px 8px 0 9px; }
.full { display: flex; align-items: center; gap: 3px; height: 16px; }
.diag ul { margin-top: 11px; }
.diag li { display: flex; align-items: center; height: 20px; padding-left: 20px; }
.diag .sub { padding-left: 40px; }
.diag i { width: 13px; }
.diag b { width: 44px; margin-left: 3px; }
.ok { width: 18px; height: 18px; margin-left: 6px; }
input[type="checkbox"] {
  appearance: none;
  display: grid;
  place-items: center;
  flex: none;
  width: 13px;
  height: 13px;
  margin: 0;
  border: 1px solid #8e8f8f;
  background: linear-gradient(135deg, #cfd2d8, #f8f8f8);
  box-shadow: inset 0 0 0 1px #f4f4f4;
}
input[type="checkbox"]:checked::before {
  content: "";
  width: 9px;
  height: 9px;
  background: #3a4f96;
  clip-path: polygon(5% 45%, 25% 40%, 42% 65%, 80% 0, 100% 5%, 50% 100%, 35% 100%);
}
.icon-btn { display: grid; grid-template-columns: 20px 1fr; align-items: center; padding: 0 6px 0 3px; }
.icon-btn svg { width: 20px; height: 20px; }
.update { width: 114px; margin: 10px 0 0 auto; }
.follow { width: 150px; }
.actions { display: flex; justify-content: flex-end; gap: 6px; margin: 36px 11px 0 0; }
.grip { position: absolute; right: 0; bottom: 0; }

/* taskbar */
.taskbar {
  flex: none;
  display: flex;
  align-items: center;
  gap: 3px;
  height: 40px;
  border-top: 1px solid #1d3c5c;
  box-shadow: inset 0 1px #8fbcdc;
  background:
    linear-gradient(90deg, transparent 88%, rgba(14,38,74,.55) 90%),
    linear-gradient(to top right, transparent 40%, rgba(190,220,250,.9) 49%, rgba(190,220,250,.9) 51%, transparent 60%) 1300px 0 / 86px 40px no-repeat,
    linear-gradient(90deg, #1f5f97, #2a76b2 5%, #3c93cb 12%, #49a6d9 22%, #44a2d6 38%, #2f88c7 50%, #3486c8 56%, #2370b4 64%, #2d7dc0 69%, #1d64ac 74%, #1d5ba4 82%, #1a4d8c 87%, #1d4470);
}
.start { width: 44px; height: 38px; margin-left: 8px; }
.start svg { width: 38px; height: 38px; }
.pin { display: grid; place-items: center; width: 63px; }
.pin svg, .task svg { width: 32px; height: 32px; }
.task {
  display: grid;
  place-items: center;
  width: 59px;
  height: 38px;
  border: 1px solid #14466e;
  border-radius: 3px;
  box-shadow: inset 0 0 0 1px rgba(255,255,255,.6);
  background: linear-gradient(135deg, rgba(255,255,255,.6), rgba(255,255,255,.2) 60%, rgba(255,255,255,.35));
}
.current { background: linear-gradient(135deg, #f2f8fc, #c5dff0 60%, #e2f0f8); }
.tray { display: flex; align-items: center; gap: 8px; margin-left: auto; color: #fff; }
.clock { display: grid; width: 66px; margin: 0 3px 0 4px; text-align: center; font: 11px/17px "Open Sans", "Noto Sans", sans-serif; }
.desk { width: 14px; height: 38px; border: 1px solid #7f9fc0; background: linear-gradient(#5a7a9c, #1b3f68 50%, #24507c); }
```
